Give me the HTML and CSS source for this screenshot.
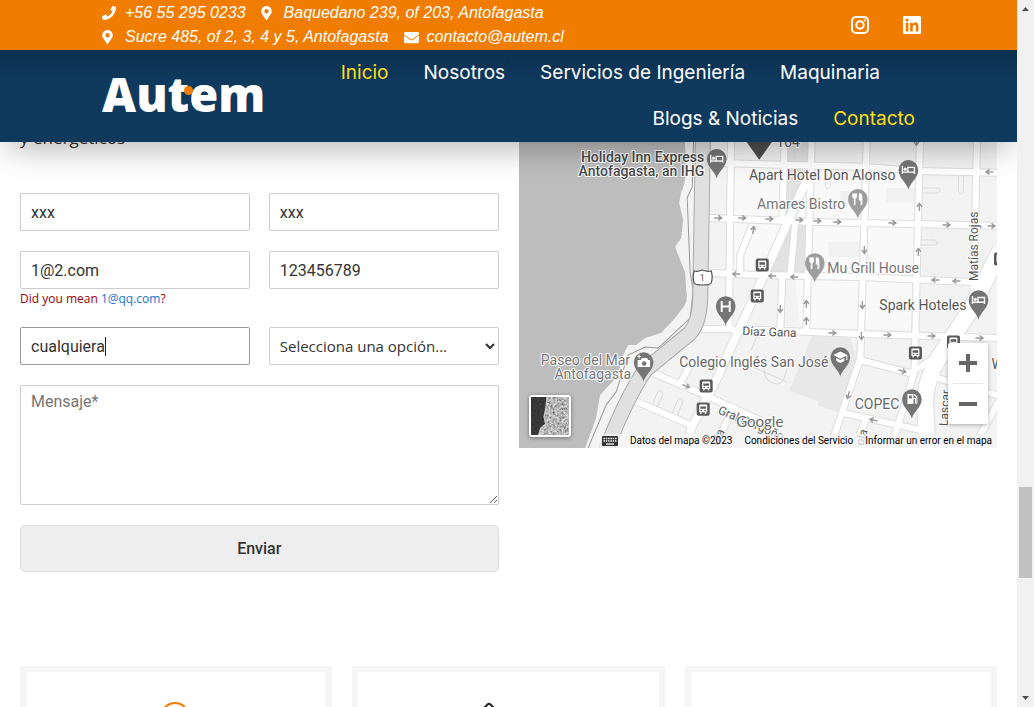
FILE: index.html
```html
<!DOCTYPE html>
<html lang="es">
<head>
<meta charset="utf-8">
<title>Autem - Contacto</title>
<link rel="stylesheet" href="styles.css">
</head>
<body>
<div class="page">
  <header class="header">
    <div class="topbar">
      <ul class="contact-list">
        <li><svg class="ico" viewBox="0 0 512 512" width="14" height="14"><path fill="currentColor" d="M493 25 389 1c-11-3-23 3-27 14l-48 112c-4 10-1 22 7 29l61 49c-36 77-99 140-177 177l-49-61c-7-8-19-11-29-7L15 362c-11 5-17 16-14 27l24 104c2 11 12 19 23 19 256 0 464-207 464-464 0-11-8-21-19-23z"/></svg><a href="#">+56 55 295 0233</a></li>
        <li><svg class="ico" viewBox="0 0 384 512" width="11" height="14"><path fill="currentColor" d="M172 502C27 291 0 270 0 192 0 86 86 0 192 0s192 86 192 192c0 78-27 99-172 310-10 13-30 13-40 0zM192 272a80 80 0 1 0 0-160 80 80 0 0 0 0 160z"/></svg><a href="#">Baquedano 239, of 203, Antofagasta</a></li>
        <li><svg class="ico" viewBox="0 0 384 512" width="11" height="14"><path fill="currentColor" d="M172 502C27 291 0 270 0 192 0 86 86 0 192 0s192 86 192 192c0 78-27 99-172 310-10 13-30 13-40 0zM192 272a80 80 0 1 0 0-160 80 80 0 0 0 0 160z"/></svg><a href="#">Sucre 485, of 2, 3, 4 y 5, Antofagasta</a></li>
        <li><svg class="ico" viewBox="0 0 512 512" width="15" height="15"><path fill="currentColor" d="M502 191c4-3 10 0 10 5v204c0 26-22 48-48 48H48c-26 0-48-22-48-48V196c0-5 6-8 10-5 22 17 52 40 154 114 21 15 57 48 92 48 35 0 72-33 92-48 102-74 132-97 154-114zM256 320c23 0 57-29 73-41 133-96 143-105 173-128 6-5 10-12 10-19v-20c0-26-22-48-48-48H48c-26 0-48 22-48 48v20c0 7 4 14 10 19 30 23 40 32 173 128 16 12 50 41 73 41z"/></svg><a href="#">contacto@autem.cl</a></li>
      </ul>
      <div class="social">
        <a href="#" aria-label="Instagram"><svg viewBox="0 0 18 18" width="18" height="18" fill="none" stroke="currentColor" stroke-width="2"><rect x="1" y="1" width="16" height="16" rx="4"/><circle cx="9" cy="9" r="3.7"/><circle cx="13.7" cy="4.3" r="1.1" fill="currentColor" stroke="none"/></svg></a>
        <a href="#" aria-label="LinkedIn"><svg viewBox="0 0 448 448" width="18" height="18"><path fill="currentColor" fill-rule="evenodd" d="M416 0H32C14 0 0 15 0 32v384c0 18 14 32 32 32h384c18 0 32-14 32-32V32c0-17-14-32-32-32zM135 384H69V170h66zM102 141a38 38 0 1 1 0-77 38 38 0 0 1 0 77zM384 384h-66V280c0-25-1-57-35-57s-40 27-40 55v106h-66V170h64v29h1c9-17 31-35 63-35 67 0 80 45 80 103z"/></svg></a>
      </div>
    </div>
    <div class="mainbar">
      <a class="logo" href="#">Autem<span class="logo-dot"></span></a>
      <nav class="nav">
        <a class="active" href="#">Inicio</a>
        <a href="#">Nosotros</a>
        <a href="#">Servicios de Ingeniería</a>
        <a href="#">Maquinaria</a>
        <a href="#">Blogs &amp; Noticias</a>
        <a class="active" href="#">Contacto</a>
      </nav>
    </div>
  </header>

  <main class="main">
    <section class="contact">
      <div class="form-col">
        <p class="intro">y energéticos</p>
        <form class="form">
          <input class="field" aria-label="Nombre" type="text" value="xxx">
          <input class="field" aria-label="Apellido" type="text" value="xxx">
          <div class="email">
            <input class="field" aria-label="Correo" type="email" value="1@2.com">
            <div class="hint">Did you mean <a href="#">1@qq.com</a>?</div>
          </div>
          <input class="field" aria-label="Teléfono" type="tel" value="123456789">
          <input class="field editing" aria-label="Empresa" type="text" value="cualquiera">
          <select class="field select" aria-label="Servicio"><option>Selecciona una opción...</option></select>
          <textarea class="field message" aria-label="Mensaje" placeholder="Mensaje*"></textarea>
          <button class="send" type="submit">Enviar</button>
        </form>
      </div>

      <div class="map">
        <svg class="map-art" viewBox="519 126 478 322" preserveAspectRatio="xMidYMid slice">
          <defs>
            <path id="pin" d="M0 19.500C-1.200 13-9.800 8.500-9.800 0a9.800 9.800 0 0 1 19.600 0C9.800 8.500 1.200 13 0 19.500z"/>
            <g id="bed"><path d="M-6-4v8M-6 2.200H6M6 4V-2.500H-.5V2" fill="none" stroke="#fff" stroke-width="1.400"/><circle cx="-3.200" cy="-.7" r="1.600" fill="#fff"/></g>
            <g id="fork"><path d="M-5.500-5.500h4.600v4.200l-1.500 1.400V6h-1.600V.1l-1.500-1.400zM1-5.500c2.500-.5 3.500 1 3.500 3.500V6H2.700V1.500H1z" fill="#fff"/></g>
            <g id="bus"><rect x="-6.500" y="-6.500" width="13" height="13" rx="2" fill="#595959"/><path fill="#fff" fill-rule="evenodd" d="M-4-3.500q0-1 1-1h6q1 0 1 1v6.500H3v1.500H1.500V3h-3v1.500H-3V3h-1zM-2.800-2.700v2.400h5.600v-2.400zM-2.700.8v1.200h1.500V.8zM1.200.8v1.200h1.500V.8z"/></g>
            <path id="arrow" d="M-4 0H3M0-2.500 3.500 0 0 2.500" fill="none" stroke="#999" stroke-width="1.400"/>
            <g id="roads" fill="none" stroke-linejoin="round">
              <path d="M731 120 729 300V325q1 6 10 6M711 163 864 167 917 171 1000 173M710 218 814 222 1000 226M711 273 757 275 860 277 970 282M785 120 782 222M782 276 780 332M812 120 806 330M867 120 860 358 829 450M920 120 914 372 890 450M977 120 973 290M740 329 860 334 1000 338M633 400 691 425M651 372 711 398 760 420M681 382 691 362M701 329H729M860 360 910 373 934 358M844 413 925 431M937 378 1000 396M1000 398 977 440M752 225 740 255V274M866 418 853 450M712 450 735 405M795 223 790 276"/>
            </g>
            <g id="avenues" fill="none" stroke-linejoin="round"><path d="M811 170 757 290 715 382 691 428 685 450"/></g>
            <path id="boulevard" fill="none" d="M1000 250 970 310 940 355Q922 385 925 410L927 450"/>
            <path id="highway" fill="none" d="M703 120 700 300Q699 322 690 333L645 370Q625 400 606 450"/>
          </defs>
          <rect x="519" y="120" width="480" height="330" fill="#f3f3f3"/>
          <path fill="#f9f9f9" d="M733 167 915 173 912 275 785 275 733 270zM795 280 912 282 910 330 800 328z"/>
          <path fill="#f1f1f1" d="M840 191h26v14h-26zM886 188h30v14h-30zM828 242h40v15h-40zM922 228h48v52h-48z"/>
          <path fill="#e2e2e2" d="M787 126h22v40l-19 52h-5zM787 223h20v52h-40z"/>
          <path fill="#e8e8e8" d="M812 335 850 338 857 362 837 412 817 405 818 401 789 391z"/>
          <path fill="#bdbdbd" d="M519 120H683L686 160Q686 185 681 192L679 203 683 220 681 238 675 247 685 273 686 290Q688 300 684 306L675 318 661 333 645 338 636 345H628L623 355 618 375 613 381 600 395 596 418 585 448H519z"/>
          <path fill="none" stroke="#999" d="M694 120 692 187 687 198 690 273 693 290 690 318 658 348 645 347 628 355 616 392 606 405 588 448"/>
          <g stroke="#dcdcdc" fill="none"><path d="M793 142q2 22 5 30 3 10 6 0M825 180v6q2 6 5 0v-6M922 188h15q5 3 0 5h-15M958 175v16q2 6 5 0v-16M920 240h14q6 3 0 5h-14M765 360q-5 22 12 24 8 0 12-28M652 405l5-12q3-5 6 0l-6 15M672 413l5-12q3-5 6 0l-6 15M737 360l50 22M751 350l5-12q4-6 8-3"/></g>
          <use href="#roads" stroke="#ddd" stroke-width="8"/><use href="#avenues" stroke="#ddd" stroke-width="10"/><use href="#boulevard" stroke="#ddd" stroke-width="18"/>
          <use href="#roads" stroke="#fff" stroke-width="6"/><use href="#avenues" stroke="#fff" stroke-width="8"/><use href="#boulevard" stroke="#fff" stroke-width="16"/>
          <use href="#highway" stroke="#aaa" stroke-width="16"/><use href="#highway" stroke="#e0e0e0" stroke-width="14"/>
          <g>
            <use href="#arrow" x="718" y="218"/><use href="#arrow" x="742" y="218"/><use href="#arrow" x="769" y="219"/><use href="#arrow" x="799" y="220"/><use href="#arrow" x="817" y="221"/><use href="#arrow" x="837" y="222"/><use href="#arrow" x="892" y="223"/><use href="#arrow" x="946" y="225"/><use href="#arrow" x="991" y="226"/>
            <use href="#arrow" x="832" y="333"/><use href="#arrow" x="887" y="335"/><use href="#arrow" x="931" y="336"/><use href="#arrow" x="979" y="338"/>
            <use href="#arrow" transform="translate(736 274) rotate(180)"/><use href="#arrow" transform="translate(772 276) rotate(180)"/><use href="#arrow" transform="translate(794 277) rotate(180)"/><use href="#arrow" transform="translate(935 280) rotate(180)"/><use href="#arrow" transform="translate(956 281) rotate(180)"/><use href="#arrow" transform="translate(989 172) rotate(180)"/>
            <use href="#arrow" transform="translate(753 230) rotate(-85)"/><use href="#arrow" transform="translate(919 207) rotate(-90)"/><use href="#arrow" transform="translate(918 252) rotate(-90)"/><use href="#arrow" transform="translate(806 304) rotate(-90)"/><use href="#arrow" transform="translate(806 321) rotate(-90)"/>
            <use href="#arrow" transform="translate(864 250) rotate(90)"/><use href="#arrow" transform="translate(862 305) rotate(90)"/><use href="#arrow" transform="translate(861 336) rotate(90)"/><use href="#arrow" transform="translate(780 309) rotate(90)"/><use href="#arrow" transform="translate(848 395) rotate(105)"/><use href="#arrow" transform="translate(916 142) rotate(90)"/>
            <use href="#arrow" transform="translate(686 386) rotate(22)"/><use href="#arrow" transform="translate(902 371) rotate(15)"/><use href="#arrow" transform="translate(873 420) rotate(193)"/>
          </g>
          <use href="#bus" x="762" y="265"/><use href="#bus" x="757" y="296"/><use href="#bus" x="706" y="386"/><use href="#bus" x="703" y="409"/><use href="#bus" x="915" y="353"/><use href="#bus" x="953" y="342"/><use href="#bus" x="1000" y="259"/>
          <path d="M694 271q4 1 8-1 5 2 9 1 2 6 0 12-1 2-9 2-7 0-8-2-2-6 0-12z" fill="#fff" stroke="#555" stroke-width="1.200"/>
          <path d="M759 160 742 136h34z" fill="#4f4f4f"/>
          <g fill="#757575"><use href="#pin" x="716.500" y="159"/><use href="#pin" x="908" y="170"/><use href="#pin" x="978" y="300"/><use href="#pin" x="725.500" y="306"/><use href="#pin" x="643.500" y="362"/><use href="#pin" x="840" y="357"/><use href="#pin" x="911.500" y="399"/></g>
          <g fill="#9e9e9e"><use href="#pin" x="857.500" y="199"/><use href="#pin" x="814.500" y="263"/></g>
          <use href="#bed" x="716.500" y="159"/><use href="#bed" x="908" y="170"/><use href="#bed" x="978" y="300"/><use href="#fork" x="857.500" y="199"/><use href="#fork" x="814.500" y="263"/>
          <path d="M721.500 301v11M729.500 301v11M721.500 306.500h8" stroke="#fff" stroke-width="2"/>
          <path fill="#fff" fill-rule="evenodd" d="M637.500 360h3l1.500-2h5l1 2h2v7h-12.500zM644 361.200a2.300 2.300 0 1 0 .1 0zM637 356h1.500v-1.500h1V356h1.500v1h-1.500v1.500h-1V357H637z"/>
          <path fill="#fff" d="M840 351.500l7 3.500v5h-1v-4.300l-6 3-7-3.700zM836 358l4 2 4-2v3l-4 2-4-2z"/>
          <path fill="#fff" fill-rule="evenodd" d="M907 394h6v10h-6zM908.500 395.500v3h3v-3zM914 394l3 2.500v6.500q-1 2-2.500 0V399H913v-1h2.500v5h.5v-5.500l-2.500-2.500z"/>
          <g class="poi">
            <g class="strong"><text x="704" y="162" text-anchor="end">Holiday Inn Express</text><text x="704" y="176" text-anchor="end">Antofagasta, an IHG</text></g>
            <text x="895" y="180" text-anchor="end">Apart Hotel Don Alonso</text>
            <text class="soft" x="845" y="209" text-anchor="end">Amares Bistro</text>
            <text class="soft" x="827" y="273">Mu Grill House</text>
            <text x="966" y="310" text-anchor="end">Spark Hoteles</text>
            <g class="soft"><text x="630" y="365" text-anchor="end">Paseo del Mar</text><text x="631" y="379" text-anchor="end">Antofagasta</text></g>
            <text class="mid" x="828" y="367" text-anchor="end">Colegio Inglés San José</text>
            <text class="mid" x="899" y="409" text-anchor="end">COPEC</text>
            <text x="776" y="147">164</text><text x="991" y="369">W</text>
          </g>
          <g class="street">
            <text class="shield" x="702" y="281" text-anchor="middle">1</text>
            <text x="742" y="335" transform="rotate(2 742 335)">Díaz Gana</text>
            <text transform="translate(978 281) rotate(-90)">Matías Rojas</text>
            <text transform="translate(947 426) rotate(-86)">Lascar</text>
            <text transform="translate(717 413) rotate(23)">Gral Gorgoño</text>
            <text transform="translate(718 446) rotate(-65)">ola</text>
            <text transform="translate(863 446) rotate(-75)">ola</text>
          </g>
          <text class="brand" x="736" y="427">Google</text>
        </svg>
        <button class="satellite" type="button" aria-label="Mostrar imágenes satelitales">
          <svg viewBox="0 0 38 38" width="38" height="38"><filter id="grain"><feTurbulence type="fractalNoise" baseFrequency=".45" numOctaves="3" seed="4"/><feColorMatrix values="1.100 0 0 0 -.08 1.100 0 0 0 -.08 1.100 0 0 0 -.08 0 0 0 0 1"/></filter><rect width="38" height="38" filter="url(#grain)"/><path fill="#222" fill-opacity=".85" d="M0 0H16L15 10 13 20 14 27 9 31 7 38H0z"/><path fill="none" stroke="#ccc" stroke-width="1.200" d="M16 0 15 10 13 20 15 27 10 31 8 38"/></svg>
        </button>
        <div class="zoom">
          <button type="button" aria-label="Acercar"><svg viewBox="0 0 18 18" width="18" height="18"><path fill="#666" d="M7 0h4v7h7v4h-7v7H7v-7H0V7h7z"/></svg></button>
          <button type="button" aria-label="Alejar"><svg viewBox="0 0 18 18" width="18" height="18"><path fill="#666" d="M0 7h18v4H0z"/></svg></button>
        </div>
        <div class="map-legal">
          <svg viewBox="0 0 16 10" width="16" height="10"><rect width="16" height="10" rx="1" fill="#333"/><path d="M1.500 2.500h13M1.500 5h13" stroke="#fff" stroke-width="1.500" stroke-dasharray="1.500 .8"/><path d="M4 8h8" stroke="#fff" stroke-width="1.300"/></svg>
          <span>Datos del mapa ©2023</span><a href="#">Condiciones del Servicio</a><a href="#">Informar un error en el mapa</a>
        </div>
      </div>
    </section>

    <section class="cards">
      <div class="card"><svg viewBox="0 0 32 30" width="32" height="30"><circle cx="15" cy="16" r="14" fill="none" stroke="#f07d00" stroke-width="2"/></svg></div>
      <div class="card"><svg viewBox="0 0 68 30" width="68" height="30"><path d="M6 11 13.500 3.500q1.500-1.500 3 0L24 11" fill="none" stroke="#222" stroke-width="2"/></svg></div>
      <div class="card"></div>
    </section>
  </main>
</div>
<div class="scroll" aria-hidden="true">
  <svg viewBox="0 0 17 17" width="17" height="17"><path fill="#505050" d="M5 11h7L8.500 7z"/></svg>
  <div class="scroll-before"></div><div class="scroll-thumb"></div><div class="scroll-after"></div>
  <svg viewBox="0 0 17 17" width="17" height="17"><path fill="#505050" d="M5 6h7l-3.500 4z"/></svg>
</div>
</body>
</html>
```

FILE: styles.css
```css
* { box-sizing: border-box; }
body {
  margin: 0;
  display: flex;
  height: 100vh;
  overflow: hidden;
  background: #fff;
  color: #333;
  font-family: Roboto, "Liberation Sans", sans-serif;
  font-size: 16px;
}
a { color: inherit; text-decoration: none; }
svg { display: block; }
.page { position: relative; flex: 1; min-width: 0; overflow: hidden; }

/* Header */
.header {
  position: absolute;
  z-index: 2;
  top: 0;
  left: 0;
  right: 0;
  color: #fff;
  box-shadow: 0 14px 30px -8px rgba(0, 0, 0, .3);
}
.topbar {
  display: flex;
  justify-content: space-between;
  align-items: center;
  height: 50px;
  padding: 0 96px 0 102px;
  background: #f07d00;
}
.contact-list {
  display: flex;
  flex-wrap: wrap;
  column-gap: 15px;
  max-width: 500px;
  margin: 0;
  padding: 0;
  list-style: none;
  font: italic 16px/24px "Liberation Sans", Arial, sans-serif;
}
.contact-list li { display: grid; grid-template-columns: 18px auto; column-gap: 5px; align-items: center; }
.social { display: flex; gap: 34px; }
.mainbar {
  display: flex;
  justify-content: space-between;
  align-items: center;
  padding: 0 102px;
  background: linear-gradient(#0c3050, #0f3a5e 36px);
}
.logo {
  position: relative;
  padding-bottom: 4px;
  font: 800 47px/60px "Open Sans", "Noto Sans", sans-serif;
}
.logo-dot {
  position: absolute;
  left: 82px;
  top: 22px;
  width: 9px;
  height: 9px;
  border-radius: 50%;
  background: #f07d00;
}
.nav {
  display: flex;
  flex: 1;
  flex-wrap: wrap;
  justify-content: flex-end;
  font: 400 19px/46px Inter, "Noto Sans", sans-serif;
}
.nav a { margin-right: 35px; }
.nav a:last-child { margin-right: 0; }
.nav .active { color: #ffde17; }

/* Contact section */
.main { padding: 126px 20px 0; }
.contact { display: grid; grid-template-columns: 1fr 1fr; column-gap: 20px; align-items: start; }
.intro { margin: 0 0 43px; font: 17px/24px "Open Sans", sans-serif; }
.form { display: grid; grid-template-columns: 1fr 1fr; gap: 20px 19px; align-items: start; }
.field {
  display: block;
  width: 100%;
  height: 38px;
  padding: 0 10px;
  border: 1px solid #ccc;
  border-radius: 2px;
  background: #fff;
  color: #333;
  font: 16px/20px Roboto, sans-serif;
  outline: none;
}
.field::placeholder { color: #757575; }
.email { height: 56px; }
.hint { color: #900; font: 12px/20px "Open Sans", sans-serif; }
.hint a { color: #1a73c8; }
.editing {
  border-color: #999;
  background: linear-gradient(#222, #222) 84px center / 1px 19px no-repeat;
}
.select { padding: 0 6px; font-family: "Open Sans", sans-serif; font-size: 15px; }
.message { grid-column: 1 / -1; height: 120px; padding: 6px 10px; resize: vertical; }
.send {
  grid-column: 1 / -1;
  height: 47px;
  border: 1px solid #ddd;
  border-radius: 5px;
  background: #eee;
  color: #333;
  font: 500 16px/20px Roboto, sans-serif;
}

/* Map */
.map { position: relative; height: 322px; overflow: hidden; }
.map-art { width: 100%; height: 100%; }
.map-art text { font-family: Roboto, sans-serif; paint-order: stroke; stroke: #fff; stroke-width: 2px; stroke-linejoin: round; }
.poi { font-size: 14px; fill: #555; }
.poi .strong { font-weight: 500; fill: #4a4a4a; }
.poi .mid { fill: #666; }
.poi .soft { fill: #757575; }
.street { font-size: 12px; fill: #555; }
.street .shield { font-size: 9px; }
.map-art .brand { font-family: Lato, sans-serif; font-size: 15px; fill: #666; }
.satellite {
  position: absolute;
  left: 10px;
  bottom: 11px;
  padding: 0;
  border: 2px solid #fff;
  border-radius: 3px;
  background: #fff;
  box-shadow: 0 1px 4px rgba(0, 0, 0, .4);
}
.zoom {
  position: absolute;
  right: 9px;
  bottom: 24px;
  width: 40px;
  padding: 0 5px;
  border-radius: 2px;
  background: #fff;
  box-shadow: 0 1px 4px rgba(0, 0, 0, .3);
}
.zoom button { display: grid; place-items: center; width: 100%; height: 40px; padding: 0; border: 0; background: none; }
.zoom button + button { height: 41px; border-top: 1px solid #e6e6e6; }
.map-legal {
  position: absolute;
  right: 0;
  bottom: 0;
  display: flex;
  align-items: center;
  gap: 12px;
  padding: 0 5px;
  background: rgba(245, 245, 245, .7);
  color: #000;
  font: 10px/14px Roboto, sans-serif;
}

/* Cards */
.cards { display: grid; grid-template-columns: repeat(3, 1fr); gap: 20px; margin-top: 94px; }
.card { display: flex; justify-content: center; height: 200px; padding-top: 29px; border: 6px solid #f5f5f5; }

/* Scrollbar */
.scroll { display: flex; flex-direction: column; width: 17px; background: #f1f1f1; }
.scroll-before { flex: 470; }
.scroll-thumb { flex: 91; margin: 0 2px; background: #c1c1c1; }
.scroll-after { flex: 112; }
```
